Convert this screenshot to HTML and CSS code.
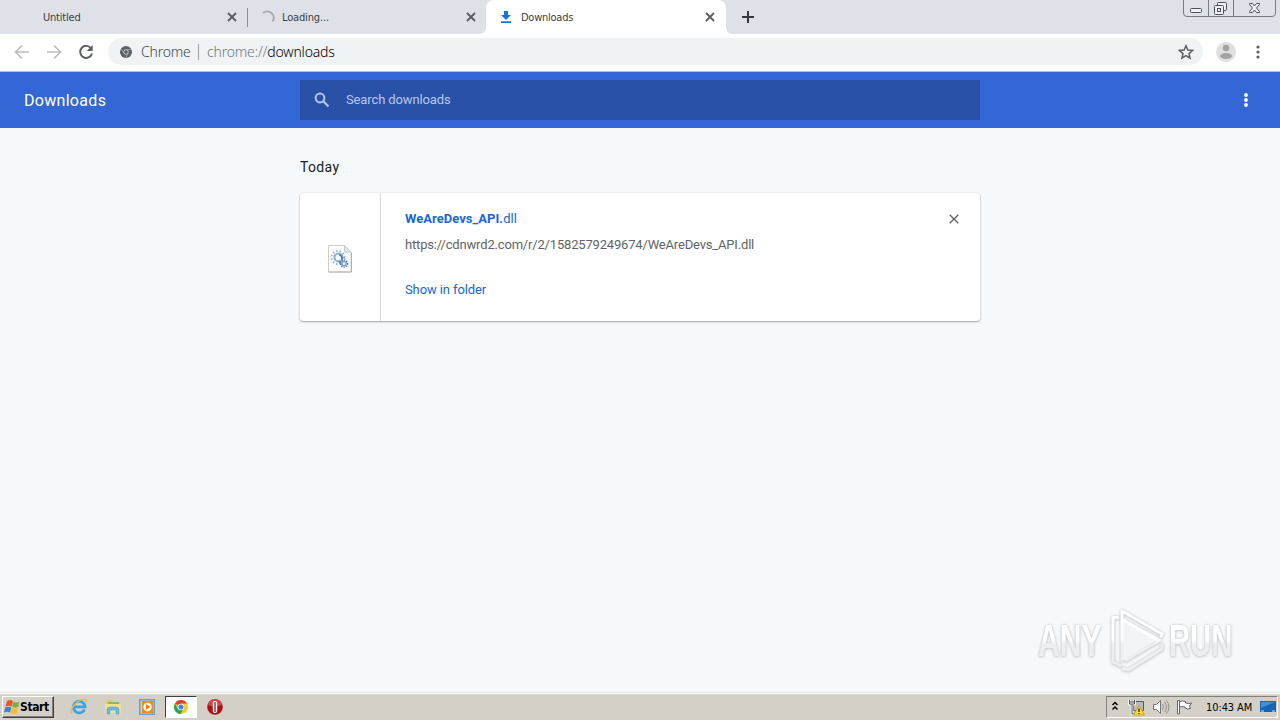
FILE: index.html
```html
<!DOCTYPE html>
<html lang="en">
<head>
<meta charset="utf-8">
<title>Downloads</title>
<link rel="stylesheet" href="styles.css">
</head>
<body>
<div class="desktop">
  <header class="tabstrip">
    <div class="tab first"><span class="tab-title t-untitled">Untitled</span><svg class="tab-close" viewBox="0 0 10 10"><path d="M1 1l8 8M9 1l-8 8"/></svg></div>
    <div class="tab second"><svg class="spinner" viewBox="0 0 14 14"><path d="M2 2.800Q7-.5 11 3.500q3.500 4 .5 8"/></svg><span class="tab-title t-loading">Loading...</span><svg class="tab-close" viewBox="0 0 10 10"><path d="M1 1l8 8M9 1l-8 8"/></svg></div>
    <div class="tab active"><svg class="dl-icon" viewBox="0 0 10 12"><path d="M3 0h4v4h3L5 9 0 4h3zM0 10.300h10V12H0z"/></svg><span class="tab-title t-downloads">Downloads</span><svg class="tab-close" viewBox="0 0 10 10"><path d="M1 1l8 8M9 1l-8 8"/></svg></div>
    <svg class="new-tab" viewBox="0 0 12 12"><path d="M6 0v12M0 6h12"/></svg>
    <svg class="win-controls" viewBox="0 0 94 18">
      <path class="frame" d="M.5 0v13q0 3.500 3.500 3.500h85q3.500 0 3.500-3.500V0M25.500 0v16.500M50.500 0v16.500"/>
      <g class="glyph"><rect x="7.500" y="8.500" width="11" height="4" rx="1"/><rect x="34.500" y="2.500" width="9" height="8" rx="1"/><rect x="31.500" y="5.500" width="9" height="9" rx="1"/><rect x="34.500" y="8.500" width="3" height="3"/>
      <path d="M66.500 3.500h3l2 2.500 2-2.500h3v1L73.500 8l3 3.500v1h-3l-2-2.500-2 2.500h-3v-1l3-3.500-3-3.500z"/></g>
    </svg>
  </header>
  <nav class="toolbar">
    <svg class="nav-icon faded" viewBox="0 0 16 16"><path d="M15 8H2M8 1.500L1.500 8 8 14.500"/></svg>
    <svg class="nav-icon faded" viewBox="0 0 16 16"><path d="M1 8h13M8 1.500L14.500 8 8 14.500"/></svg>
    <svg class="nav-icon" viewBox="0 0 16 16"><path d="M13.200 4.500A6 6 0 1 0 14 9.500"/><path class="solid" d="M14.700 1v6h-6z"/></svg>
    <div class="omnibox">
      <svg class="chrome-mark" viewBox="0 0 12 12"><circle cx="6" cy="6" r="6" fill="#5b6065"/><circle cx="6" cy="6" r="2.300" fill="#5b6065" stroke="#d5d9dc" stroke-width=".8"/><path d="M6 3.500h5.300M3.900 7.300L1.300 2.800M8.100 7.300l-2.500 4.500" stroke="#b5b9bc" stroke-width=".7"/></svg>
      <span class="origin">Chrome</span><span class="omni-sep"></span><span class="url">chrome://<b>downloads</b></span>
      <svg class="star" viewBox="0 0 16 16"><path d="M8 1.800l1.900 4.300 4.700.4-3.600 3.100 1.100 4.600L8 11.700l-4.100 2.500L5 9.600 1.400 6.500l4.700-.4z"/></svg>
    </div>
    <svg class="avatar" viewBox="0 0 20 20"><circle cx="10" cy="10" r="10" fill="#dfdfe0"/><circle cx="10" cy="6" r="3.200" fill="#a2a3a5"/><ellipse cx="10" cy="14" rx="6" ry="3" fill="#a2a3a5"/></svg>
    <svg class="dots dark" viewBox="0 0 4 16"><circle cx="2" cy="3" r="1.600"/><circle cx="2" cy="8" r="1.600"/><circle cx="2" cy="13" r="1.600"/></svg>
  </nav>
  <div class="page-header">
    <h1>Downloads</h1>
    <div class="search"><svg class="search-icon" viewBox="0 0 16 16"><circle cx="6" cy="6" r="4.400"/><path d="M9.300 9.300l5.200 5.200"/></svg><span>Search downloads</span></div>
    <svg class="dots light" viewBox="0 0 4 16"><circle cx="2" cy="3" r="1.900"/><circle cx="2" cy="8" r="1.900"/><circle cx="2" cy="13" r="1.900"/></svg>
  </div>
  <main class="content">
    <h2>Today</h2>
    <article class="card">
      <div class="file-cell">
        <svg class="file-icon" viewBox="0 0 24 28"><path d="M.5.500h16l6.500 6.500v20H.5z" fill="#fcfcfd" stroke="#d0cdc9"/><path d="M1 27h22.500V7.500" fill="none" stroke="#b8b0aa"/><path d="M16.500.500v6.500h6.500z" fill="#e4e7ea" stroke="#c4c7ca"/>
        <circle cx="10" cy="12.500" r="6.500" fill="none" stroke="#8fb2d0" stroke-width="2" stroke-dasharray="1.400 2.100"/><circle cx="10.500" cy="12.500" r="4" fill="#fff" stroke="#8db3d2" stroke-width="2.200"/><path d="M11 9.500q4 2 3 6" fill="none" stroke="#41729c" stroke-width="1.300"/><path d="M11 16l3 4" stroke="#5585ad" stroke-width="2"/><circle cx="16" cy="18.500" r="3.500" fill="none" stroke="#598ab4" stroke-width="1.600" stroke-dasharray="1.300 1"/><circle cx="16" cy="18.500" r="2.300" fill="#d9e9f3" stroke="#7ba5c6" stroke-width="1.500"/></svg>
      </div>
      <div class="details">
        <a class="file-name"><b>WeAreDevs_API.</b>dll</a>
        <div class="file-url">https://cdnwrd2.com/r/2/1582579249674/WeAreDevs_API.dll</div>
        <a class="show">Show in folder</a>
      </div>
      <svg class="remove" viewBox="0 0 10 10"><path d="M.7.700l8.600 8.600M9.300.700L.7 9.300"/></svg>
    </article>
  </main>
  <div class="watermark"><span class="any">ANY</span>
    <svg class="play" viewBox="0 0 60 66">
      <defs><linearGradient id="fade" gradientUnits="userSpaceOnUse" x1="0" y1="0" x2="0" y2="66"><stop offset=".48" stop-color="#fff"/><stop offset=".56" stop-color="#eceeef"/></linearGradient></defs>
      <path d="M15 12v42l37-23z" fill="#f2f4f5"/>
      <path class="line" d="M9.500 10.500H5V55l7 3.500M14 53V4L54 27l-1 2M14 12L50 33.500M18 53l34-20M15 61.500l5 1.500 34-21v-4"/>
    </svg>
    <span class="run">RUN</span></div>
  <footer class="taskbar">
    <div class="start"><svg class="flag" viewBox="0 0 16 16"><path d="M3 2q3-2 6 0L7.500 7.500Q4.500 6 1.500 7.500z" fill="#e95824"/><path d="M9.500 2.500q3 2 6 0L14 8q-3 1.500-6-.5z" fill="#78b537"/><path d="M1.300 8.500q3-1.500 6 0L6 13.500Q3 12 0 13.500z" fill="#3d7fd3"/><path d="M8 8.500q3 2 6 .5l-1.500 5.500q-3 1.500-6-.5z" fill="#f6bd25"/></svg><span>Start</span></div>
    <svg class="app ie" viewBox="0 0 18 18"><path d="M14.500 11.500A5.800 5.800 0 1 1 15 8.800H5" fill="none" stroke="#3ba5e4" stroke-width="2.800"/><path d="M2 16C-1 13 4 5 10 2.500c5-2.300 7-1 6 2" fill="none" stroke="#e8b93b" stroke-width="1.300"/></svg>
    <svg class="app explorer" viewBox="0 0 18 18"><path d="M2 3l2-1h4l1 2h7v6H2z" fill="#e8c968"/><path d="M4 4h11v2H4z" fill="#7abf65"/><path d="M1 6h16v9H1z" fill="#f6df8b"/><path d="M3 16v-4q0-3 3-3h6q3 0 3 3v4h-3v-4H6v4z" fill="#68b9e3" stroke="#4d9fca" stroke-width=".5"/></svg>
    <svg class="app player" viewBox="0 0 18 18"><path d="M1 1h16v16H1z" fill="#64a0d2"/><path d="M2.500 2.500h13v13h-13z" fill="#b4d6ef"/><path d="M4 3h11v12H4z" fill="#f28c18"/><circle cx="9.500" cy="9" r="4.200" fill="#fff"/><path d="M8 6v6l4.500-3z" fill="#f07d12"/></svg>
    <div class="running"><svg viewBox="0 0 14 14"><circle cx="7" cy="7" r="7" fill="#f7cb25"/><path d="M7 7L.9 3.500A7 7 0 0 1 13.100 3.500H7z" fill="#df4234"/><path d="M.9 3.500A7 7 0 0 0 6.500 14L9.500 8.800 7 7 3.800 8.500z" fill="#31a554"/><circle cx="7" cy="7" r="3.300" fill="#fff"/><circle cx="7" cy="7" r="2.500" fill="#4280e9"/></svg></div>
    <svg class="app opera" viewBox="0 0 18 18"><circle cx="9" cy="9" r="7.800" fill="#a91216"/><path d="M2 7a7 6 0 0 1 14 0q-7 3-14 0" fill="#cf4649"/><rect x="6.800" y="3" width="4.400" height="12" rx="2" fill="#fff"/><path d="M9 4v10" stroke="#8d1719" stroke-width="1.300"/></svg>
    <div class="tray">
      <svg class="chev" viewBox="0 0 8 10"><path d="M1.500 4l2.500-2.500L6.500 4M1.500 8.500L4 6l2.500 2.500"/></svg>
      <svg class="net" viewBox="0 0 17 17"><path d="M5.500 2.500h10v9h-10z" fill="#b9bab8" stroke="#57595a"/><path d="M1.500 1v4h5V1M4 5v10h7" fill="none" stroke="#fff" stroke-width="2.500"/><path d="M1.500 1v4h5V1M4 5v10h6M2 3h4" fill="none" stroke="#555"/><path d="M11 6.500l5.500 9.500H5.500z" fill="#f8dc36" stroke="#c8a115"/><path d="M11 9.500v3.500M11 14v1" stroke="#222" stroke-width="1.300"/></svg>
      <svg class="vol" viewBox="0 0 18 16"><path d="M1.500 5.500h3l4-4v13l-4-4h-3z" fill="#fff" stroke="#777"/><path d="M10.500 5q2 3 0 6M12.500 3q4 5 0 10M14.500 1.500q5 6.500 0 13" fill="none" stroke="#888" stroke-width=".9"/></svg>
      <svg class="alert" viewBox="0 0 17 16"><path d="M1.500 15V1.500H3.500V15z" fill="#fff" stroke="#666"/><path d="M3.500 2.500q3-1 6 0v1.500q3 1 6 0l-2 3 1 2.500q-3 1-5.500-.5v-1q-3-1-5.500 0z" fill="#fff" stroke="#666"/></svg>
      <time>10:43 AM</time>
      <svg class="screen" viewBox="0 0 16 12"><path d="M0 0h16v11H0z" fill="#1765b4"/><path d="M1 1h14L1 7z" fill="#428ed3"/><path d="M1 10h3M12 10h3" stroke="#c9e4f8"/></svg>
    </div>
  </footer>
</div>
</body>
</html>
```
FILE: styles.css
```css
* { box-sizing: border-box; }
body { margin: 0; width: 1280px; height: 720px; overflow: hidden; }
svg { display: block; flex: none; }
.desktop { position: relative; display: flex; flex-direction: column; height: 720px; background: #f6f9fc; font-family: Roboto, sans-serif; }
.tabstrip { display: flex; align-items: center; height: 34px; background: #dee1e8; font: 11px "DejaVu Sans Condensed", "Noto Sans", sans-serif; color: #3c4043; }
.tab { display: flex; align-items: center; height: 34px; white-space: nowrap; }
.first { width: 248px; padding: 0 11px 0 43px; background: linear-gradient(#898c92, #898c92) right center / 1px 19px no-repeat; }
.second { width: 238px; padding: 0 10px 0 13px; }
.active { position: relative; width: 240px; padding: 0 11px 0 15px; background: #fff; border-radius: 8px 8px 0 0; }
.active::before, .active::after { content: ""; position: absolute; bottom: 0; width: 6px; height: 6px; }
.active::before { left: -6px; background: radial-gradient(circle at 0 0, transparent 5.500px, #fff 6px); }
.active::after { right: -6px; background: radial-gradient(circle at 100% 0, transparent 5.500px, #fff 6px); }
.t-untitled { letter-spacing: -.2px; }
.t-loading { letter-spacing: -.15px; }
.t-downloads { letter-spacing: -.25px; }
.tab-close { width: 10px; height: 10px; margin-left: auto; fill: none; stroke: #5a5d62; stroke-width: 1.800; }
.spinner { width: 14px; height: 14px; margin-right: 7px; fill: none; stroke: #a5a8ad; stroke-width: 1.800; }
.dl-icon { width: 10px; height: 12px; margin-right: 10px; fill: #1a73d8; }
.new-tab { width: 12px; height: 12px; margin-left: 16px; fill: none; stroke: #35383c; stroke-width: 2; }
.win-controls { width: 94px; height: 18px; margin: 0 3px auto auto; fill: none; }
.frame { stroke: #777c85; }
.glyph { stroke: #4b505a; fill: #eef0f5; }
.toolbar { display: flex; align-items: center; height: 38px; padding: 0 20px 2px 14px; background: #fff; border-bottom: 1px solid #b4c1dc; }
.nav-icon { width: 16px; height: 16px; margin-right: 16px; fill: none; stroke: #5b5e62; stroke-width: 2; }
.nav-icon .solid { fill: #5b5e62; stroke: none; }
.faded { stroke: #bcbdbf; stroke-width: 1.700; }
.omnibox { display: flex; align-items: center; width: 1095px; height: 27px; margin-left: -2px; padding: 0 9px 0 12px; border-radius: 14px; background: #f0f3f6; font: 300 14px "Noto Sans", sans-serif; color: #44484c; white-space: nowrap; }
.chrome-mark { width: 12px; height: 12px; margin-right: 9px; fill: none; }
.origin { width: 50px; letter-spacing: -.2px; }
.omni-sep { width: 1px; height: 16px; margin: 0 8px 0 7px; background: #9da1a6; }
.url { color: #74787d; letter-spacing: -.18px; }
.url b { font-weight: 300; color: #000; }
.star { width: 16px; height: 16px; margin-left: auto; fill: none; stroke: #5b5e62; stroke-width: 1.500; }
.avatar { width: 20px; height: 20px; margin-left: 13px; }
.dots { width: 4px; height: 16px; }
.dark { margin-left: auto; fill: #5b5e62; }
.light { margin-left: auto; fill: #fff; }
.page-header { display: flex; align-items: center; height: 56px; padding: 0 32px 0 24px; background: #3367d6; color: #fff; }
.page-header h1 { width: 276px; margin: 0; font: 400 16px Roboto, sans-serif; letter-spacing: .3px; }
.search { display: flex; align-items: center; width: 680px; height: 40px; padding: 0 14px; background: #2a51a8; color: #b8c8ec; font-size: 13px; letter-spacing: -.12px; }
.search span { padding-bottom: 2px; }
.search-icon { width: 16px; height: 16px; margin-right: 16px; fill: none; stroke: #b7c8ee; stroke-width: 2; }
.content { width: 680px; height: 564px; margin: 0 auto; padding-top: 30px; }
.content h2 { height: 35px; margin: 0; font: 400 14px/19px Roboto, sans-serif; letter-spacing: .35px; color: #202124; }
.card { display: flex; height: 128px; border-radius: 3px; background: #fff; box-shadow: 0 1px 2px rgba(60,64,67,.45), 0 0 1px rgba(60,64,67,.25); }
.file-cell { display: flex; align-items: center; justify-content: center; width: 81px; padding-top: 3px; border-right: 1px solid #d5d7da; }
.file-icon { width: 24px; height: 28px; }
.details { display: flex; flex-direction: column; padding: 16px 0 0 24px; font-size: 13px; line-height: 20px; white-space: nowrap; }
.file-name { color: #1967d2; letter-spacing: .03px; }
.file-name b { font-weight: 700; }
.file-url { margin-top: 6px; color: #5f6368; letter-spacing: -.175px; }
.show { margin-top: 25px; color: #1967d2; letter-spacing: -.1px; }
.remove { width: 10px; height: 10px; margin: 21px 21px 0 auto; fill: none; stroke: #5b5e62; stroke-width: 1.300; }
.watermark { position: absolute; left: 1038px; top: 607px; display: flex; align-items: center; height: 66px; font: 700 45px/66px "Liberation Sans", sans-serif; filter: drop-shadow(0 0 1px #c3c7c9) drop-shadow(0 1px 1px #d6d9db); }
.watermark span { padding-top: 2px; color: transparent; background: linear-gradient(#fff 50%, #eceeef 56%); -webkit-background-clip: text; background-clip: text; white-space: nowrap; transform-origin: left; }
.watermark .any { width: 95px; margin-right: -30px; transform: scaleX(.67); }
.play { width: 60px; height: 66px; margin-left: 5px; fill: none; }
.line { stroke: url(#fade); stroke-width: 3; stroke-linejoin: round; stroke-linecap: round; }
.watermark .run { width: 98px; margin: 0 -34px 0 1px; transform: scaleX(.65); }
.taskbar { display: flex; align-items: center; height: 28px; padding: 1px 2px 0; background: #d4d0c8; border-top: 1px solid #e4e2dc; box-shadow: inset 0 1px #fff; font: 11px "DejaVu Sans Condensed", sans-serif; color: #000; }
.start { display: flex; align-items: center; width: 52px; height: 22px; padding-left: 1px; border: 1px solid; border-color: #fff #404040 #404040 #fff; box-shadow: inset -1px -1px #808080; font-size: 12px; font-weight: 700; letter-spacing: -.4px; }
.flag { width: 16px; height: 16px; }
.app { width: 18px; height: 18px; }
.ie { margin-left: 16px; }
.explorer { margin-left: 16px; }
.player { margin-left: 16px; }
.running { display: flex; align-items: center; justify-content: center; width: 32px; height: 22px; margin-left: 9px; background: #fff; border: 1px solid; border-color: #404040 #fff #fff #404040; }
.running svg { width: 14px; height: 14px; }
.opera { margin-left: 9px; }
.tray { display: flex; align-items: center; width: 172px; height: 22px; margin-left: auto; padding-left: 4px; border: 1px solid; border-color: #808080 #fff #fff #808080; white-space: nowrap; }
.chev { width: 8px; height: 10px; margin-bottom: 2px; fill: none; stroke: #000; stroke-width: 1.500; }
.net { width: 17px; height: 17px; margin-left: 9px; }
.vol { width: 18px; height: 16px; margin-left: 7px; }
.alert { width: 17px; height: 16px; margin-left: 6px; }
.tray time { width: 48px; margin-left: 13px; letter-spacing: -.1px; }
.screen { width: 16px; height: 12px; margin-left: 6px; }
```
